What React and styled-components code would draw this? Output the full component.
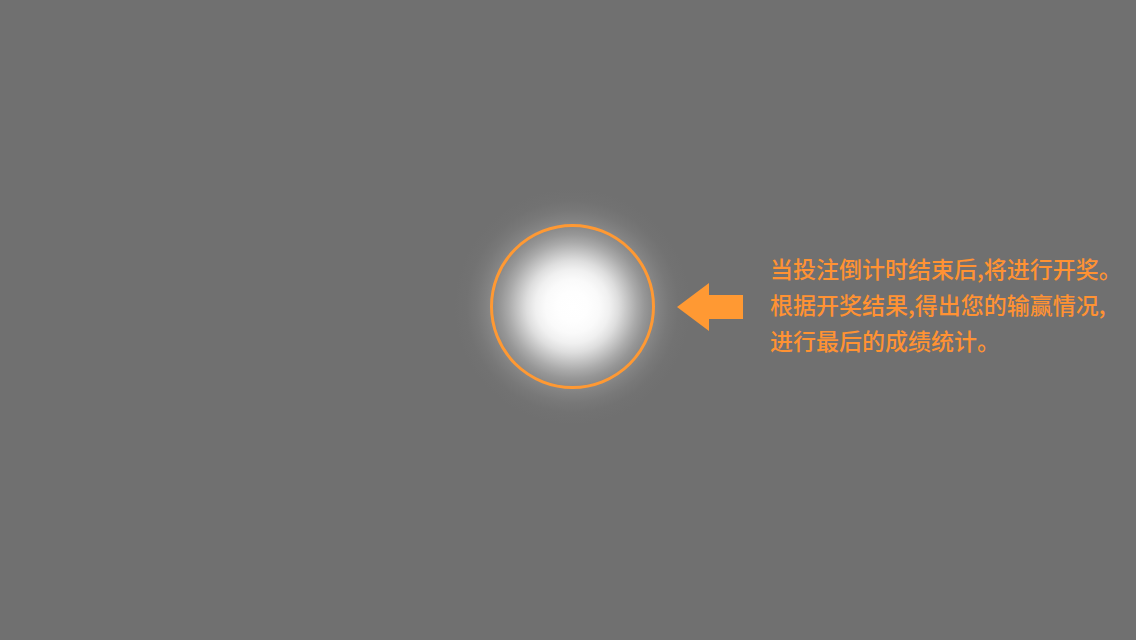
import React from "react";
import styled, { createGlobalStyle } from "styled-components";

const GlobalStyle = createGlobalStyle`
  body {
    margin: 0;
    background: #707070;
  }
`;

const Overlay = styled.main`
  box-sizing: border-box;
  min-height: 100vh;
  padding: 0 0 27px 9px;
  display: grid;
  grid-template-columns: 1fr auto 1fr;
  align-items: center;
  overflow: hidden;
  background: #707070;
  color: #ff9933;
`;

const Spotlight = styled.div`
  grid-column: 2;
  position: relative;
  width: 165px;
  height: 165px;

  &::before {
    content: "";
    position: absolute;
    inset: -38px;
    border-radius: 50%;
    background: radial-gradient(
      circle closest-side,
      #ffffff 0px,
      #fefefe 15px,
      #fafafa 27px,
      #f0f0f0 37px,
      #dedede 46px,
      #c4c4c4 55px,
      #aaaaaa 64px,
      #979797 72px,
      #8b8b8b 79px,
      #818181 87px,
      #787878 96px,
      #727272 106px,
      #707070 118px
    );
  }

  &::after {
    content: "";
    position: absolute;
    inset: 0;
    border: 3px solid #ff9933;
    border-radius: 50%;
  }
`;

const Hint = styled.section`
  position: relative;
  display: flex;
  align-items: center;
  gap: 27px;
  padding-left: 22px;
  min-width: 0;
`;

const Arrow = styled.svg`
  flex: none;
  width: 66px;
  height: 48px;
  fill: #ff9933;
`;

const Message = styled.p`
  margin: 0;
  padding-bottom: 6px;
  font-family: "Noto Sans CJK SC", sans-serif;
  font-size: 23px;
  font-weight: 500;
  line-height: 36px;
  white-space: nowrap;
  color: #ff9233;
`;

export default function App() {
  return (
    <>
      <GlobalStyle />
      <Overlay lang="zh-CN">
        <Spotlight />
        <Hint>
          <Arrow viewBox="0 0 66 48" aria-hidden="true">
            <path d="M0 24 32 0V12H66V36H32V48Z" />
          </Arrow>
          <Message>
            当投注倒计时结束后,将进行开奖。
            <br />
            根据开奖结果,得出您的输赢情况,
            <br />
            进行最后的成绩统计。
          </Message>
        </Hint>
      </Overlay>
    </>
  );
}
